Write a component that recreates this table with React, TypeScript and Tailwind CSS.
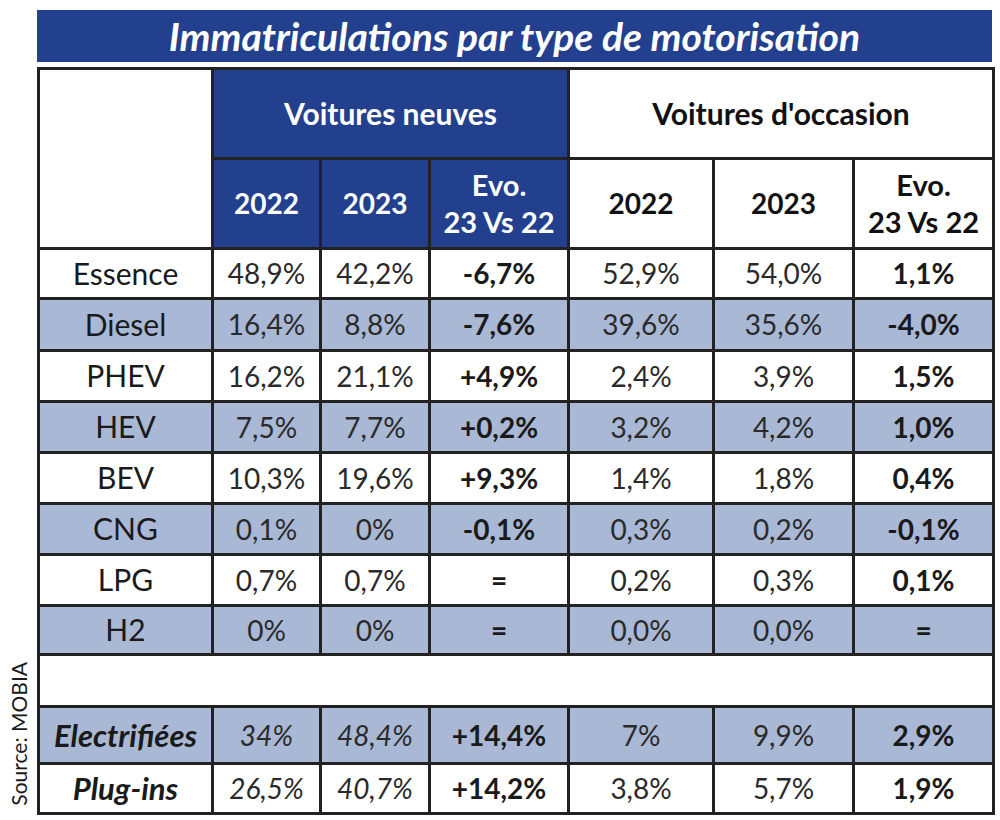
import React from "react";

type Row = {
  label: string;
  n22: string;
  n23: string;
  nevo: string;
  o22: string;
  o23: string;
  oevo: string;
  shade: boolean;
  italic?: boolean;
  h: string;
};

const rows: Row[] = [
  { label: "Essence", n22: "48,9%", n23: "42,2%", nevo: "-6,7%", o22: "52,9%", o23: "54,0%", oevo: "1,1%", shade: false, h: "h-[50px]" },
  { label: "Diesel", n22: "16,4%", n23: "8,8%", nevo: "-7,6%", o22: "39,6%", o23: "35,6%", oevo: "-4,0%", shade: true, h: "h-[52px]" },
  { label: "PHEV", n22: "16,2%", n23: "21,1%", nevo: "+4,9%", o22: "2,4%", o23: "3,9%", oevo: "1,5%", shade: false, h: "h-[51px]" },
  { label: "HEV", n22: "7,5%", n23: "7,7%", nevo: "+0,2%", o22: "3,2%", o23: "4,2%", oevo: "1,0%", shade: true, h: "h-[51px]" },
  { label: "BEV", n22: "10,3%", n23: "19,6%", nevo: "+9,3%", o22: "1,4%", o23: "1,8%", oevo: "0,4%", shade: false, h: "h-[51px]" },
  { label: "CNG", n22: "0,1%", n23: "0%", nevo: "-0,1%", o22: "0,3%", o23: "0,2%", oevo: "-0,1%", shade: true, h: "h-[51px]" },
  { label: "LPG", n22: "0,7%", n23: "0,7%", nevo: "=", o22: "0,2%", o23: "0,3%", oevo: "0,1%", shade: false, h: "h-[51px]" },
  { label: "H2", n22: "0%", n23: "0%", nevo: "=", o22: "0,0%", o23: "0,0%", oevo: "=", shade: true, h: "h-[49px]" },
];

const totals: Row[] = [
  { label: "Electrifiées", n22: "34%", n23: "48,4%", nevo: "+14,4%", o22: "7%", o23: "9,9%", oevo: "2,9%", shade: true, italic: true, h: "h-[57px]" },
  { label: "Plug-ins", n22: "26,5%", n23: "40,7%", nevo: "+14,2%", o22: "3,8%", o23: "5,7%", oevo: "1,9%", shade: false, italic: true, h: "h-[50px]" },
];

const td = "border-[3px] border-[#222222] text-center align-middle p-0 leading-tight";

function DataRow({ r }: { r: Row }) {
  const bg = r.shade ? "bg-[#a9b8d5]" : "bg-white";
  const label = r.italic
    ? "font-bold italic text-[31px] text-[#1a1a1a]"
    : "text-[30px] text-[#1a1a1a]";
  const newVal = r.italic ? "italic text-[28px] text-[#2a2a2a]" : "text-[28px] text-[#2a2a2a]";
  return (
    <tr className={`${bg} ${r.h}`}>
      <td className={`${td} ${label}`}>{r.label}</td>
      <td className={`${td} ${newVal}`}>{r.n22}</td>
      <td className={`${td} ${newVal}`}>{r.n23}</td>
      <td className={`${td} font-bold text-[28px] text-[#1a1a1a]`}>{r.nevo}</td>
      <td className={`${td} text-[28px] text-[#2a2a2a]`}>{r.o22}</td>
      <td className={`${td} text-[28px] text-[#2a2a2a]`}>{r.o23}</td>
      <td className={`${td} font-bold text-[28px] text-[#1a1a1a]`}>{r.oevo}</td>
    </tr>
  );
}

export default function App() {
  return (
    <div
      className="w-[1000px] h-[820px] bg-white flex flex-row"
      style={{ fontFamily: "Lato, 'Open Sans', sans-serif" }}
    >
      <div className="w-[37px] flex flex-col justify-end items-center pb-[14px]">
        <span className="[writing-mode:vertical-rl] rotate-180 text-[21px] text-[#1a1a1a] leading-none">
          Source: MOBIA
        </span>
      </div>
      <div className="w-[955px] pt-[10px]">
        <div className="h-[52px] bg-[#23408f] flex items-center justify-center">
          <span className="text-white font-bold italic text-[39px] leading-none">
            Immatriculations par type de motorisation
          </span>
        </div>
        <table className="mt-[5px] w-[955px] table-fixed border-collapse">
          <colgroup>
            <col className="w-[174px]" />
            <col className="w-[108px]" />
            <col className="w-[109px]" />
            <col className="w-[139px]" />
            <col className="w-[145px]" />
            <col className="w-[140px]" />
            <col className="w-[140px]" />
          </colgroup>
          <thead>
            <tr className="h-[90px]">
              <th rowSpan={2} className={`${td} bg-white`}></th>
              <th colSpan={3} className={`${td} bg-[#23408f] text-white font-bold text-[30px]`}>
                Voitures neuves
              </th>
              <th colSpan={3} className={`${td} bg-white text-[#111] font-bold text-[30px]`}>
                Voitures d'occasion
              </th>
            </tr>
            <tr className="h-[90px]">
              <th className={`${td} bg-[#23408f] text-white font-bold text-[28px]`}>2022</th>
              <th className={`${td} bg-[#23408f] text-white font-bold text-[28px]`}>2023</th>
              <th className={`${td} bg-[#23408f] text-white font-bold text-[29px]`}>
                Evo.
                <br />
                23 Vs 22
              </th>
              <th className={`${td} bg-white text-[#111] font-bold text-[28px]`}>2022</th>
              <th className={`${td} bg-white text-[#111] font-bold text-[28px]`}>2023</th>
              <th className={`${td} bg-white text-[#111] font-bold text-[29px]`}>
                Evo.
                <br />
                23 Vs 22
              </th>
            </tr>
          </thead>
          <tbody>
            {rows.map((r) => (
              <DataRow key={r.label} r={r} />
            ))}
            <tr className="h-[52px] bg-white">
              <td colSpan={7} className={td}></td>
            </tr>
            {totals.map((r) => (
              <DataRow key={r.label} r={r} />
            ))}
          </tbody>
        </table>
      </div>
    </div>
  );
}
